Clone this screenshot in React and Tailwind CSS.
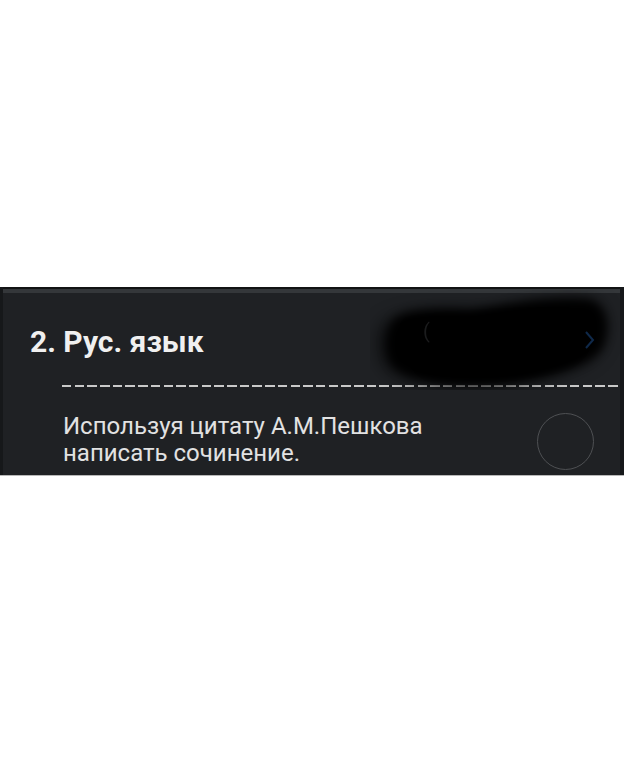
export default function App() {
  return (
    <div className="min-h-[763px] bg-white pt-[287px]" style={{ fontFamily: 'Roboto, "Noto Sans", sans-serif' }}>
      <div className="relative h-[188px] bg-[#1f2124] border-l-[3px] border-r-[4px] border-[#16181a] overflow-hidden">
        <div className="h-[2px] bg-[#121314]" />
        <div className="h-[4px] bg-[#34373a]" />

        <div className="pl-[27px] pt-[31px]">
          <h2 className="text-[30px] leading-[36px] font-bold text-[#f0f0f0]">2. Рус. язык</h2>
        </div>

        <div className="ml-[59px] mt-[25px] h-[2px] bg-[repeating-linear-gradient(90deg,#c9c9c9_0,#c9c9c9_9.5px,transparent_9.5px,transparent_12.7px)]" />

        <div className="flex items-start justify-between pl-[60px] pr-[26px] pt-[26px]">
          <p className="text-[24px] leading-[27px] text-[#e2e2e2]">
            Используя цитату А.М.Пешкова
            <br />
            написать сочинение.
          </p>
          <div className="w-[57px] h-[57px] rounded-full border-[1.5px] border-[#4e5053]" />
        </div>

        <svg className="absolute left-[367px] top-[3px]" width="254" height="100" viewBox="0 0 254 100">
          <defs>
            <filter id="blur" x="-20%" y="-40%" width="140%" height="180%">
              <feGaussianBlur stdDeviation="5" />
            </filter>
            <filter id="soft" x="-30%" y="-50%" width="160%" height="200%">
              <feGaussianBlur stdDeviation="9" />
            </filter>
          </defs>
          <text x="53" y="48" fill="#3a3b3d" fontSize="20" fontFamily="Roboto, sans-serif">(</text>
          <path d="M216 42 L223 50 L216 58" fill="none" stroke="#1f4f8f" strokeWidth="2.5" />
          <g filter="url(#soft)" opacity="0.55">
            <path d="M12 34 C30 20 80 18 120 22 C160 12 200 6 226 12 C242 24 238 56 220 70 C190 86 150 98 100 98 C60 98 24 92 12 74 C6 60 6 44 12 34 Z" fill="#000" />
          </g>
          <g filter="url(#blur)" opacity="0.97">
            <path d="M22 32 C30 20 62 18 100 20 C140 14 180 6 220 10 C238 16 240 40 232 58 C222 72 200 80 168 88 C140 94 112 96 84 94 C54 92 28 86 20 72 C14 58 16 42 22 32 Z" fill="#000" />
          </g>
          <g filter="url(#blur)" opacity="0.7">
            <path d="M40 36 C80 30 150 26 205 28 C218 40 214 62 192 72 C150 82 100 86 60 82 C44 70 36 50 40 36 Z" fill="#000" />
          </g>
          <path d="M216 42 L223 50 L216 58" fill="none" stroke="#1c4a87" strokeWidth="2" opacity="0.55" />
          <text x="53" y="48" fill="#2e2f31" fontSize="20" fontFamily="Roboto, sans-serif" opacity="0.6">(</text>
        </svg>
      </div>
      <div className="h-[1px] bg-[#b8b8b8]" />
    </div>
  )
}
